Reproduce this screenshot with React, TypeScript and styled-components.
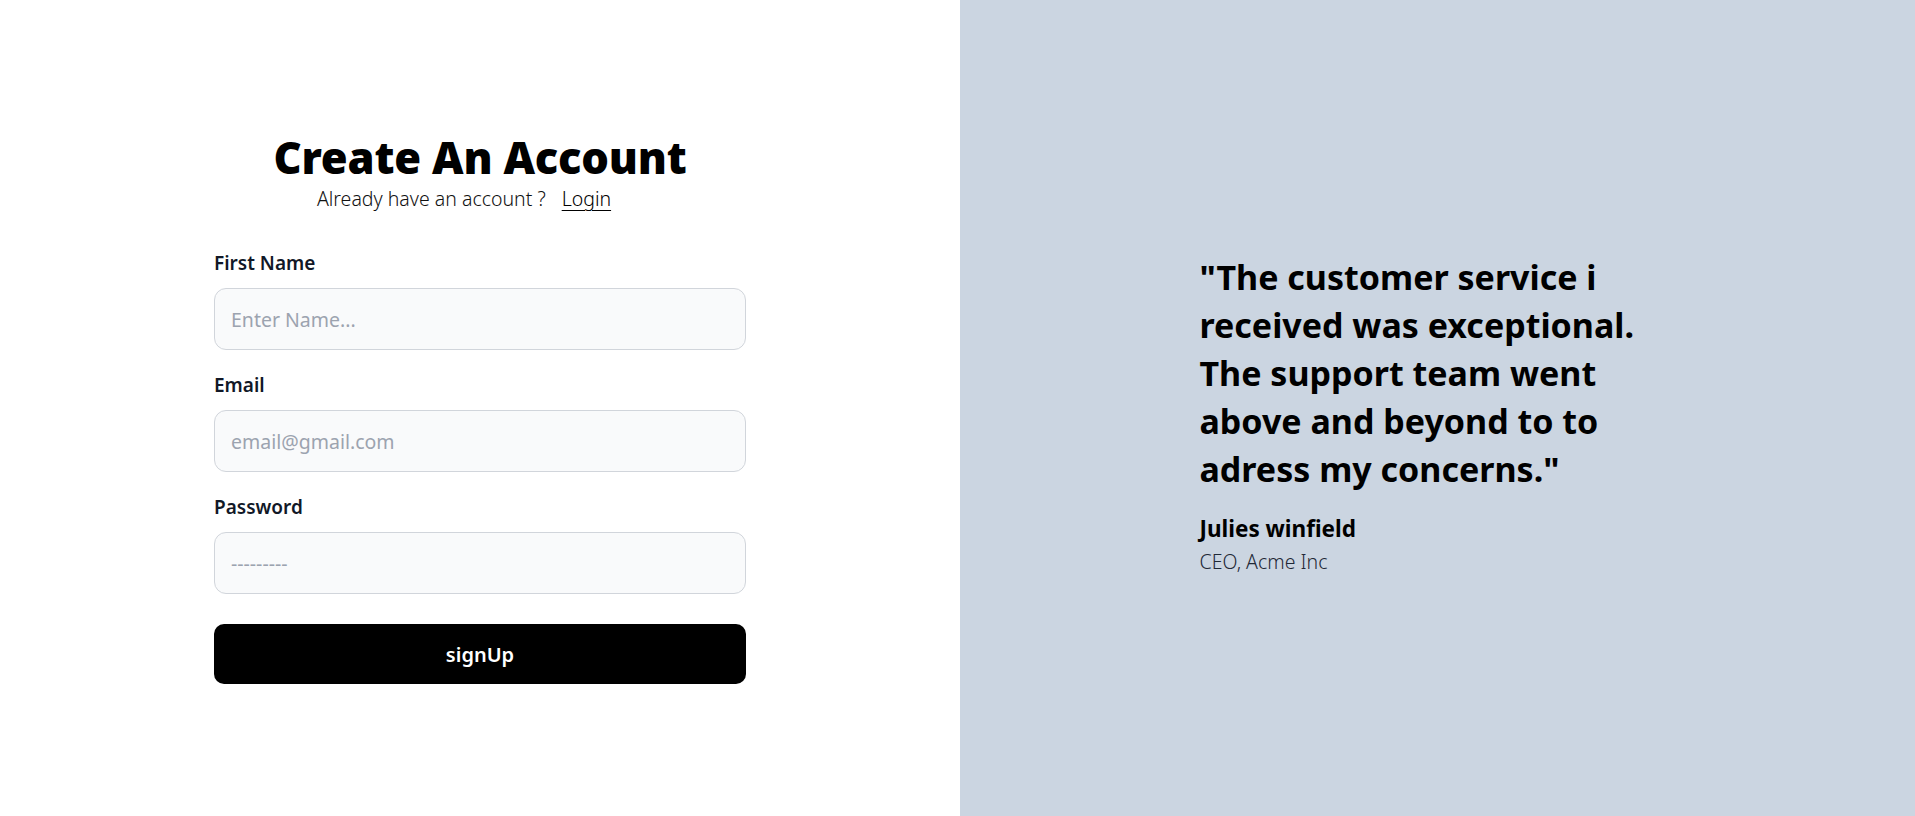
import React from "react";
import styled, { createGlobalStyle } from "styled-components";

const Global = createGlobalStyle`
  * { box-sizing: border-box; }
  html, body { margin: 0; padding: 0; }
  body {
    font-family: "Noto Sans", "Open Sans", "Liberation Sans", sans-serif;
    color: #000;
    background: #fff;
  }
`;

const Page = styled.div`
  display: grid;
  grid-template-columns: 960px 1fr;
  min-height: 816px;
`;

const LeftPanel = styled.section`
  display: flex;
  align-items: center;
  justify-content: center;
  background: #fff;
`;

const FormBox = styled.div`
  width: 532px;
  display: flex;
  flex-direction: column;
`;

const Title = styled.h1`
  margin: 0;
  text-align: center;
  font-size: 43.5px;
  line-height: 50px;
  font-weight: 900;
  letter-spacing: -0.2px;
`;

const Sub = styled.p`
  margin: 4px 0 0;
  padding-right: 32px;
  text-align: center;
  font-size: 19.5px;
  line-height: 26px;
  font-weight: 300;
  color: #111;
`;

const LoginLink = styled.a`
  margin-left: 16px;
  color: #000;
  text-decoration: underline;
  text-underline-offset: 4px;
  cursor: pointer;
`;

const Fields = styled.form`
  margin-top: 37px;
  display: flex;
  flex-direction: column;
  gap: 21px;
`;

const Field = styled.div`
  display: flex;
  flex-direction: column;
  gap: 11px;
`;

const Label = styled.label`
  font-size: 19px;
  line-height: 28px;
  font-weight: 600;
  color: #111827;
`;

const Input = styled.input`
  height: 62px;
  width: 100%;
  padding: 0 16px;
  border: 1px solid #d1d5db;
  border-radius: 12px;
  background: #f9fafb;
  font-family: inherit;
  font-size: 19.5px;
  color: #111827;
  outline: none;
  &::placeholder {
    color: #9ca3af;
    font-weight: 400;
  }
`;

const Submit = styled.button`
  margin-top: 9px;
  height: 60px;
  width: 100%;
  border: none;
  border-radius: 10px;
  background: #000;
  color: #fff;
  font-family: inherit;
  font-size: 20px;
  font-weight: 600;
  cursor: pointer;
`;

const RightPanel = styled.section`
  display: flex;
  align-items: center;
  justify-content: center;
  background: #cbd5e1;
`;

const Testimonial = styled.figure`
  margin: 0;
  padding-top: 13px;
  width: 476px;
  display: flex;
  flex-direction: column;
`;

const Quote = styled.blockquote`
  margin: 0;
  font-size: 34px;
  line-height: 48px;
  font-weight: 700;
  color: #000;
`;

const Author = styled.figcaption`
  margin-top: 20px;
  display: flex;
  flex-direction: column;
`;

const Name = styled.span`
  font-size: 22.5px;
  line-height: 32px;
  font-weight: 700;
`;

const Role = styled.span`
  margin-top: 2px;
  font-size: 19.5px;
  line-height: 30px;
  font-weight: 300;
  color: #1f2937;
`;

export default function App() {
  return (
    <>
      <Global />
      <Page>
        <LeftPanel>
          <FormBox>
            <Title>Create An Account</Title>
            <Sub>
              Already have an account ?<LoginLink>Login</LoginLink>
            </Sub>
            <Fields onSubmit={(e) => e.preventDefault()}>
              <Field>
                <Label htmlFor="name">First Name</Label>
                <Input id="name" type="text" placeholder="Enter Name..." />
              </Field>
              <Field>
                <Label htmlFor="email">Email</Label>
                <Input id="email" type="email" placeholder="email@gmail.com" />
              </Field>
              <Field>
                <Label htmlFor="password">Password</Label>
                <Input id="password" type="password" placeholder="---------" />
              </Field>
              <Submit type="submit">signUp</Submit>
            </Fields>
          </FormBox>
        </LeftPanel>
        <RightPanel>
          <Testimonial>
            <Quote>
              "The customer service i<br />
              received was exceptional.<br />
              The support team went<br />
              above and beyond to to<br />
              adress my concerns."
            </Quote>
            <Author>
              <Name>Julies winfield</Name>
              <Role>CEO, Acme Inc</Role>
            </Author>
          </Testimonial>
        </RightPanel>
      </Page>
    </>
  );
}
